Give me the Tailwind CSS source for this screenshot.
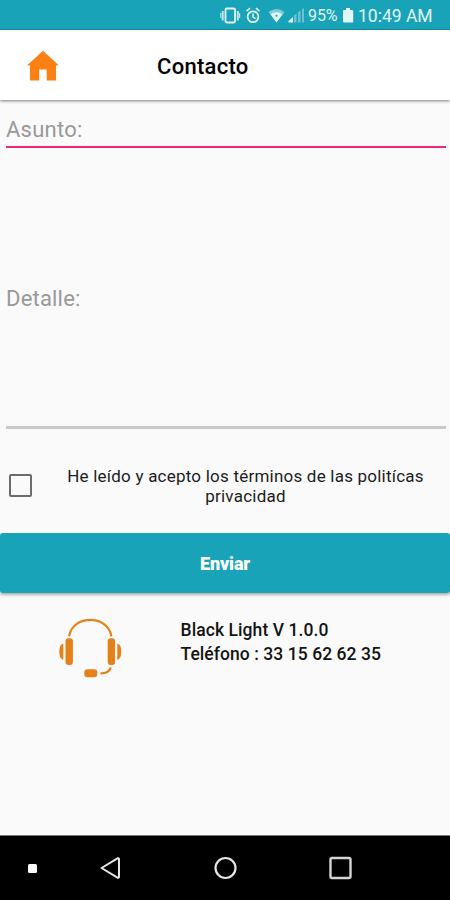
<!DOCTYPE html>
<html lang="es">
<head>
<meta charset="utf-8">
<title>Contacto</title>
<script src="https://cdn.jsdelivr.net/npm/@tailwindcss/browser@4"></script>
</head>
<body class="bg-[#fafafa]">
<div class="w-[450px] h-[900px] flex flex-col overflow-hidden bg-[#fafafa] font-['Roboto',sans-serif] text-black">
  <div class="h-[30px] shrink-0 bg-[#18a3b9] border-b border-[#1595aa] flex items-center justify-end pr-[18px] pt-[3px] text-[#e2f6f9]">
    <svg class="w-[88px] h-[20px] shrink-0" viewBox="220 6 88 20" fill="none">
      <rect x="225.500" y="8.500" width="9.500" height="14" rx="1.200" stroke="#e2f6f9" stroke-width="1.800"/>
      <path d="M222.700 11v9.500M237.800 11v9.500" stroke="#b9e4ec" stroke-width="2"/>
      <path d="M220.800 13v5M239.600 13v5" stroke="#b9e4ec" stroke-width="1.200"/>
      <circle cx="253" cy="16.800" r="5.400" stroke="#e2f6f9" stroke-width="1.800"/>
      <path d="M253 13.500v3.600l2.500 1.600M246.500 11.200l3.600-3M259.500 11.200l-3.600-3" stroke="#e2f6f9" stroke-width="1.500"/>
      <path d="M268.500 12Q276.500 6 284.500 12L276.500 22.500Z" fill="#7fcbd7"/>
      <path d="M270.500 14.200Q276.500 10.500 282.500 14.200L276.500 22.500Z" fill="#e2f6f9"/>
      <circle cx="276.500" cy="15.800" r="1" fill="#18a3b9"/>
      <path d="M288.500 22.500v-1.500l4.500-4v5.500z" fill="#e2f6f9"/>
      <path d="M294 22.500v-7l2.500-2v9zM298 22.500v-10l2.500-2v12zM302 22.500v-13l2-1.500v14.500z" fill="#6bc3d1"/>
    </svg>
    <span class="w-[31px] text-[16px] leading-5 tracking-[-0.100px] whitespace-nowrap">95%</span>
    <svg class="w-[19px] h-[20px] shrink-0" viewBox="339 6 19 20"><path d="M346 8h4v2h2.200q1 0 1 1v10.500q0 1-1 1h-8.200q-1 0-1-1V11q0-1 1-1h2z" fill="#e2f6f9"/></svg>
    <span class="w-[74px] text-[17.500px] leading-5 whitespace-nowrap">10:49 AM</span>
  </div>
  <header class="h-[70px] shrink-0 bg-white flex items-center shadow-[0_1px_3px_rgba(0,0,0,0.5)] z-10">
    <svg class="ml-[27px] mt-[2px] w-[32px] h-[32px]" viewBox="0 0 32 32"><path d="M16 .8L32 15.500H29V30.500H19.700V19.500H12.300V30.500H3V15.500H0Z" fill="#fd8014"/></svg>
    <h1 class="ml-[98px] mt-[3px] text-[22px] leading-[26px] font-medium tracking-[0.280px]">Contacto</h1>
  </header>
  <div class="ml-[6px] mr-[4.500px] h-[48px] shrink-0 border-b-2 border-[#ef2a75] pt-[17px] text-[22px] leading-[26px] tracking-[0.250px] text-[#999]">Asunto:</div>
  <div class="ml-[6px] mr-[4.500px] h-[281px] shrink-0 border-b-3 border-[#c9c9c9] flex items-center pt-[23px] text-[22px] leading-[26px] tracking-[0.200px] text-[#999]">Detalle:</div>
  <div class="h-[104px] shrink-0 flex items-center pt-[6px]">
    <div class="ml-[9px] mt-[3px] w-[23px] h-[23px] shrink-0 border-2 border-[#6c6c6c] rounded-[2px]"></div>
    <p class="ml-[33px] mt-[3px] w-[361px] text-center text-[17px] leading-[20px] tracking-[0.220px] whitespace-nowrap text-[#1c1c1c]">He leído y acepto los términos de las politícas<br>privacidad</p>
  </div>
  <button class="h-[60px] shrink-0 rounded-[3px] bg-[#18a3b9] text-white text-[18px] font-black tracking-[-0.150px] shadow-[0_2px_3px_rgba(0,0,0,0.3)]">Enviar</button>
  <div class="h-[243px] shrink-0 flex items-start border-b border-[#777]">
    <svg class="ml-[56px] mt-[23px] w-[68px] h-[64px] shrink-0" viewBox="56 616 68 64" fill="none">
      <path d="M69.300 635.500C73 614.700 107.500 614.700 111.200 635.500" stroke="#e58119" stroke-width="2.200" stroke-linecap="round"/>
      <rect x="65.500" y="638.300" width="7.400" height="26.700" rx="3" fill="#e58119"/>
      <rect x="107.700" y="638.300" width="7.400" height="26.700" rx="3" fill="#e58119"/>
      <path d="M63.300 643.500V660Q59.300 659 59.300 651.800T63.300 643.500ZM117.300 643.500V660Q121.300 659 121.300 651.800T117.300 643.500Z" fill="#e58119"/>
      <rect x="84.300" y="669.200" width="13" height="8" rx="3" fill="#e58119"/>
      <path d="M100.500 673.400Q109 673.500 110.800 667.500" stroke="#e58119" stroke-width="2.300"/>
    </svg>
    <div class="ml-[56.500px] mt-[25px] text-[17.500px] leading-[24px] font-medium text-[#141414] whitespace-nowrap">
      <p class="tracking-[0.080px]">Black Light V 1.0.0</p>
      <p class="tracking-[0.060px]">Teléfono : 33 15 62 62 35</p>
    </div>
  </div>
  <nav class="h-[64px] shrink-0 bg-black flex items-center">
    <div class="ml-[28px] w-[9px] h-[9px] bg-white rounded-[1.500px]"></div>
    <svg class="ml-[62px] w-[24px] h-[24px]" viewBox="0 0 24 24" fill="none"><path d="M2.500 12L18.500 2.300Q20 1.800 20 3.300V20.700Q20 22.200 18.500 21.700Z" stroke="#e5e5e5" stroke-width="2" stroke-linejoin="round"/></svg>
    <svg class="ml-[90px] w-[24px] h-[24px]" viewBox="0 0 24 24" fill="none"><circle cx="12.500" cy="12" r="10" stroke="#e5e5e5" stroke-width="2.200"/></svg>
    <svg class="ml-[92px] w-[24px] h-[24px]" viewBox="0 0 24 24" fill="none"><rect x="1.500" y="2" width="20" height="20" rx="1.500" stroke="#d5d5d5" stroke-width="2.400"/></svg>
  </nav>
</div>
</body>
</html>
